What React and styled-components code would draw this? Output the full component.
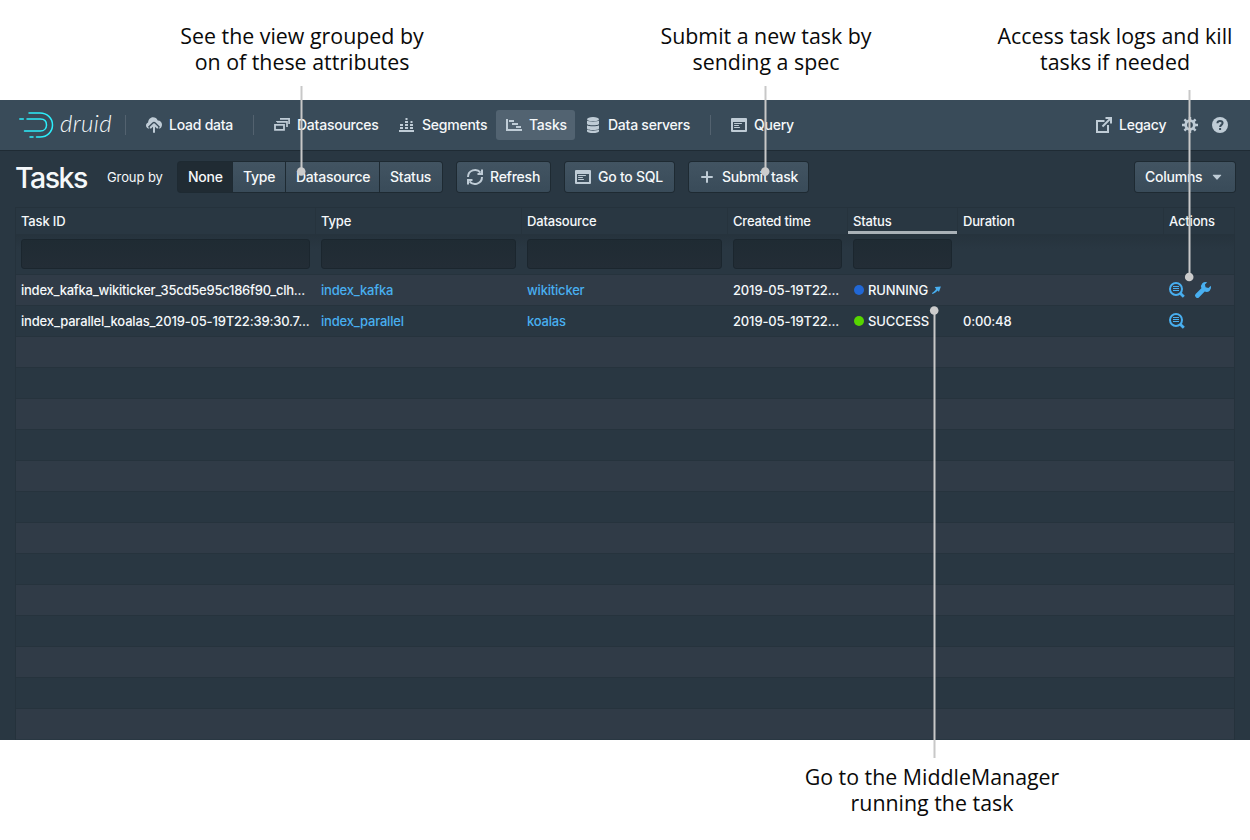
import React from 'react';
import styled, { createGlobalStyle } from 'styled-components';

const Global = createGlobalStyle`
  * { box-sizing: border-box; }
  body { margin: 0; background: #fff; overflow: hidden; }
`;

const Page = styled.div`
  position: relative;
  width: 1250px;
  height: 840px;
  background: #fff;
  font-family: Inter, 'Liberation Sans', sans-serif;
`;
const Band = styled.div`
  display: flex;
  height: 100px;
  padding-top: ${p => p.$top}px;
`;
const Caption = styled.p`
  margin: 0 0 0 ${p => p.$left}px;
  width: 280px;
  flex: none;
  text-align: center;
  font: 400 21.36px/26px 'Open Sans', sans-serif;
  color: #0a0a0a;
  white-space: nowrap;
`;
const Console = styled.main`
  display: flex;
  flex-direction: column;
  height: 640px;
  overflow: hidden;
  background: #293742;
  color: #f5f8fa;
`;
const Navbar = styled.nav`
  display: flex;
  align-items: center;
  flex: none;
  height: 50px;
  padding: 0 15px 0 19px;
  background: #394b59;
  box-shadow: 0 1px 0 #1f2b34;
`;
const Logo = styled.div`
  display: flex;
  align-items: center;
  width: 106px;
  flex: none;
`;
const Wordmark = styled.span`
  margin: -4px 0 0 6px;
  font: italic 300 24px/30px Lato, sans-serif;
  letter-spacing: 0.4px;
`;
const Divider = styled.i`
  width: 1px;
  height: 20px;
  margin: 0 10px;
  background: #53626f;
  &:first-of-type { margin-left: 0; }
`;
const NavItem = styled.a`
  display: flex;
  align-items: center;
  gap: 7px;
  width: ${p => p.$w}px;
  height: 30px;
  padding-left: ${p => p.$pad ?? 10}px;
  border-radius: 3px;
  flex: none;
  font-size: 14px;
  font-weight: 500;
  white-space: nowrap;
  background: ${p => (p.$active ? '#526371' : 'transparent')};
`;
const Spacer = styled.div`flex: 1;`;
const Label = styled.span`
  padding-bottom: 2px;
  letter-spacing: -0.24px;
`;
const Svg = styled.svg`
  width: ${p => p.$size}px;
  height: ${p => p.$size}px;
  flex: none;
  display: block;
  overflow: visible;
  color: ${p => p.$color || '#bfccd6'};
`;

const Toolbar = styled.header`
  display: flex;
  align-items: center;
  flex: none;
  height: 57px;
  padding: 0 15px 3px;
`;
const Title = styled.h1`
  margin: 2px 0 0;
  width: 92px;
  font-size: 28.5px;
  line-height: 34px;
  font-weight: 500;
  letter-spacing: -1.5px;
`;
const GroupLabel = styled.span`
  width: 71px;
  font-size: 13px;
  font-weight: 400;
  letter-spacing: -0.1px;
`;
const Button = styled.button`
  display: flex;
  align-items: center;
  flex: none;
  gap: 7px;
  width: ${p => p.$w}px;
  height: 30px;
  margin-left: ${p => p.$ml || 0}px;
  padding: 0 0 0 10px;
  border: 0;
  border-radius: 3px;
  background: ${p => (p.$active ? '#202b33' : 'linear-gradient(#425462, #394b59)')};
  box-shadow: 0 0 0 1px #1e2a32;
  color: #f5f8fa;
  font: 500 14px Inter, sans-serif;
  white-space: nowrap;
`;
const ButtonGroup = styled.div`
  display: flex;
  gap: 1px;
  ${Button} { border-radius: 0; }
  ${Button}:first-child { border-radius: 3px 0 0 3px; }
  ${Button}:last-child { border-radius: 0 3px 3px 0; }
`;

const Table = styled.section`
  margin: 0 15px;
  flex: 1;
  border: 1px solid #25323c;
  border-bottom: 0;
  font-size: 13px;
`;
const Row = styled.div`
  display: grid;
  grid-template-columns: 300px 206px 206px 120px 110px 206px 71px;
  align-items: center;
  height: 31px;
  background: ${p => (p.$odd ? '#303b47' : '#293742')};
  border-top: 1px solid #26333d;
`;
const HeaderRow = styled(Row)`
  height: 26px;
  border-top: 0;
  font-weight: 500;
`;
const HeaderCell = styled.div`
  height: 26px;
  padding: 0 5px;
  line-height: 27px;
  letter-spacing: -0.17px;
  border-right: 1px solid #26333d;
  box-shadow: ${p => (p.$sorted ? 'inset 0 -3px 0 #a9b1b7' : 'none')};
`;
const FilterRow = styled(Row)`
  height: 40px;
  align-items: start;
  padding-top: 4px;
  background: linear-gradient(#26333d, #293742 14px);
`;
const Filter = styled.input`
  display: block;
  width: calc(100% - 11px);
  height: 30px;
  margin-left: 5px;
  border: 1px solid #1b262e;
  border-radius: 3px;
  background: linear-gradient(#1f2b33, #232d36);
`;
const Cell = styled.div`
  display: flex;
  align-items: center;
  min-width: 0;
  padding: 0 5px;
  font-weight: 500;
  letter-spacing: ${p => p.$ls ?? -0.2}px;
  white-space: nowrap;
  color: ${p => (p.$link ? '#48aff0' : '#f5f8fa')};
`;
const Dot = styled.i`
  width: 10px;
  height: 10px;
  border-radius: 50%;
  margin: 0 4px 0 1px;
  background: ${p => p.$color};
`;
const WorkerLink = styled.a`
  display: flex;
  margin-left: 4px;
`;
const Actions = styled(Cell)`gap: 10px;`;
const Overlay = styled.svg`
  position: absolute;
  inset: 0;
  z-index: 2;
  pointer-events: none;
`;

const glyphs = {
  upload: (
    <>
      <path fill="currentColor" d="M2.200 11.500C.9 11 0 9.900 0 8.500c0-1.500.8-2.700 2.100-3.100C2.300 2.500 4.300.2 7 .2c2.200 0 3.900 1.200 4.700 3.200C14.200 3.300 16 5 16 7.400c0 1.900-.8 3.400-2.200 4z" />
      <path fill="#394b59" d="M8 4.700a2.300 2.300 0 0 1 1.600.7l4.300 4.300-2.300 3.300H4.400L2 9.800l4.400-4.400A2.300 2.300 0 0 1 8 4.700z" />
      <path fill="none" stroke="currentColor" strokeWidth="2" strokeLinecap="round" strokeLinejoin="round" d="M8 7.500V15M4.700 10.500 8 7.200l3.300 3.300" />
    </>
  ),
  stack: (
    <g fill="none" stroke="currentColor" strokeWidth="1.800">
      <path d="M1 7.900h9v5H1z" />
      <path d="M3 5V4.900h10V10" strokeWidth="1.700" />
      <path d="M6 1.900h9.100V7" strokeWidth="1.700" />
    </g>
  ),
  segments: (
    <path fill="currentColor" d="M0 13h15v2H0zM1 10h3v2H1zM1 7h3v2H1zM6 10h3v2H6zM6 7h3v2H6zM6 4h3v2H6zM6.500 1h2v2h-2zM11 10h3v2h-3zM11 7h3v2h-3zM11.500 4h2v2h-2z" />
  ),
  gantt: (
    <path fill="currentColor" d="M0 2h2v10h14v2H0zM3 3h5v2H3zM6 6h6v2H6zM10 9h5v2h-5z" />
  ),
  database: (
    <g fill="currentColor">
      <ellipse cx="8" cy="2.200" rx="6" ry="2.100" />
      <path d="M2 3.500c1.200 1.500 10.800 1.500 12 0v3.300c0 2-12 2-12 0z" />
      <path d="M2 8.200c1.200 1.500 10.800 1.500 12 0v3.200c0 2-12 2-12 0z" />
      <path d="M2 12.600c1.200 1.500 10.800 1.500 12 0v1.300c0 2.800-12 2.800-12 0z" />
    </g>
  ),
  app: (
    <path fill="currentColor" fillRule="evenodd" d="M1 1h14a1 1 0 0 1 1 1v12a1 1 0 0 1-1 1H1a1 1 0 0 1-1-1V2a1 1 0 0 1 1-1zm1 4v8h12V5zM3.500 6h7a.5.5 0 0 1 0 1h-7a.5.5 0 0 1 0-1zm0 2h4a.5.5 0 0 1 0 1h-4a.5.5 0 0 1 0-1zm0 2h5a.5.5 0 0 1 0 1h-5a.5.5 0 0 1 0-1z" />
  ),
  share: (
    <g fill="none" stroke="currentColor" strokeWidth="2">
      <path d="M8.500 4H1v11h11V8" />
      <path d="M6.500 9.500 14 2" />
      <path d="M9.500 1H15v5.500" />
    </g>
  ),
  gear: (
    <>
      <circle cx="8" cy="8" r="4.300" fill="none" stroke="currentColor" strokeWidth="2.800" />
      <g stroke="currentColor" strokeWidth="2.400">
        <path d="M8 0v3M8 13v3M0 8h3M13 8h3M2.400 2.400l2 2M11.600 11.600l2 2M13.600 2.400l-2 2M4.400 11.600l-2 2" />
      </g>
    </>
  ),
  help: (
    <>
      <circle cx="8" cy="8" r="8" fill="currentColor" />
      <path fill="none" stroke="#394b59" strokeWidth="2" d="M5.400 6.200C5.500 4.700 6.600 4 8 4s2.600.8 2.600 2.100c0 1.700-2.400 1.900-2.500 3.900" />
      <path fill="#394b59" d="M7.100 11h2v2h-2z" />
    </>
  ),
  refresh: (
    <g fill="none" stroke="currentColor" strokeWidth="2">
      <path d="M1 8a7 7 0 0 1 12.500-4.300M15 8a7 7 0 0 1-12.500 4.300" />
      <path d="M15 .5V5h-4.500M1 15.500V11h4.500" />
    </g>
  ),
  plus: <path stroke="currentColor" strokeWidth="2" strokeLinecap="round" d="M8 3v10M3 8h10" />,
  caret: <path fill="currentColor" d="M4 5.800h8c.3.1.3.500.1.700L8.400 10.600a.5.5 0 0 1-.8 0L3.900 6.500c-.2-.2-.2-.6.1-.7z" />,
  logs: (
    <g fill="none" stroke="currentColor">
      <circle cx="7" cy="7" r="6" strokeWidth="2" />
      <path d="m11.500 11.500 3.300 3.300" strokeWidth="2.800" />
      <path d="M4 4.500h6M4 6.500h6M4 8.500h6" strokeWidth="1" />
    </g>
  ),
  wrench: (
    <path fill="currentColor" d="M15.800 3.700 13.400 6 10.600 5.300 9.900 2.600 12.200.2A4.600 4.600 0 0 0 6.400 6.200L.6 12.100a2 2 0 0 0 0 2.800l.5.5a2 2 0 0 0 2.800 0L9.700 9.600A4.600 4.600 0 0 0 15.800 3.700z" />
  ),
  arrow: (
    <path fill="currentColor" d="M4.800 1.800 15.800.8 12.300 10.800 10.300 8.200C7.500 11 5 12.800 1.200 14 .2 14.300-.2 12.600.7 12 3.600 10.400 5.500 8.500 7.200 5.500z" />
  )
};
const Icon = ({ name, color, size = 16 }) => (
  <Svg viewBox="0 0 16 16" $color={color} $size={size}>{glyphs[name]}</Svg>
);

const Nav = ({ icon, children, ...rest }) => (
  <NavItem {...rest}>
    <Icon name={icon} />
    {children && <Label>{children}</Label>}
  </NavItem>
);

const columns = ['Task ID', 'Type', 'Datasource', 'Created time', 'Status', 'Duration', 'Actions'];
const tasks = [
  { id: 'index_kafka_wikiticker_35cd5e95c186f90_clh...', type: 'index_kafka', source: 'wikiticker', status: 'RUNNING', color: '#2167d5', duration: '' },
  { id: 'index_parallel_koalas_2019-05-19T22:39:30.7...', type: 'index_parallel', source: 'koalas', status: 'SUCCESS', color: '#57d500', duration: '0:00:48' }
];
const callouts = [
  [301.5, 86, 171.500],
  [765.5, 86, 171.500],
  [1189.5, 90, 277],
  [934.5, 758, 310.500]
];

export default function App() {
  return (
    <Page>
      <Global />
      <Band $top={23}>
        <Caption $left={162}>See the view grouped by<br />on of these attributes</Caption>
        <Caption $left={184}>Submit a new task by<br />sending a spec</Caption>
        <Caption $left={69}>Access task logs and kill<br />tasks if needed</Caption>
      </Band>
      <Console>
        <Navbar>
          <Logo>
            <svg width="35" height="28" viewBox="0 0 35 28" fill="none" stroke="#2ceefb" strokeWidth="1.500" strokeLinecap="round">
              <path d="M10 2h11c7 0 12.500 5 12.500 12S28 26 21 26h-3.500" />
              <path d="M8 8h13.500c4 0 6 2.500 6 6s-2.500 6-6 6H5.500M.8 8h3.500M11 26h3" />
            </svg>
            <Wordmark>druid</Wordmark>
          </Logo>
          <Divider />
          <Nav icon="upload" $w={107}>Load data</Nav>
          <Divider />
          <Nav icon="stack" $w={125}>Datasources</Nav>
          <Nav icon="segments" $w={107}>Segments</Nav>
          <Nav icon="gantt" $w={79} $active>Tasks</Nav>
          <Nav icon="database" $w={125}>Data servers</Nav>
          <Divider />
          <Nav icon="app" $w={82}>Query</Nav>
          <Spacer />
          <Nav icon="share" $w={89}>Legacy</Nav>
          <Nav icon="gear" $w={30} $pad={7} />
          <Nav icon="help" $w={30} $pad={7} />
        </Navbar>
        <Toolbar>
          <Title>Tasks</Title>
          <GroupLabel>Group by</GroupLabel>
          <ButtonGroup>
            <Button $w={54} $active><Label>None</Label></Button>
            <Button $w={52}><Label>Type</Label></Button>
            <Button $w={93}><Label>Datasource</Label></Button>
            <Button $w={62}><Label>Status</Label></Button>
          </ButtonGroup>
          <Button $w={93} $ml={15}><Icon name="refresh" /><Label>Refresh</Label></Button>
          <Button $w={109} $ml={15}><Icon name="app" /><Label>Go to SQL</Label></Button>
          <Button $w={119} $ml={15}><Icon name="plus" /><Label>Submit task</Label></Button>
          <Spacer />
          <Button $w={100}><Label>Columns</Label><Icon name="caret" /></Button>
        </Toolbar>
        <Table>
          <HeaderRow>
            {columns.map(c => <HeaderCell key={c} $sorted={c === 'Status'}>{c}</HeaderCell>)}
          </HeaderRow>
          <FilterRow>
            {columns.slice(0, 5).map(c => <div key={c}><Filter aria-label={c} /></div>)}
          </FilterRow>
          {tasks.map((t, i) => (
            <Row key={t.id} $odd={i % 2 === 0}>
              <Cell $ls={i === 0 ? -0.25 : -0.17}>{t.id}</Cell>
              <Cell $link>{t.type}</Cell>
              <Cell $link>{t.source}</Cell>
              <Cell $ls={-0.14}>2019-05-19T22...</Cell>
              <Cell $ls={-0.1}>
                <Dot $color={t.color} />
                {t.status}
                {i === 0 && <WorkerLink><Icon name="arrow" color="#48aff0" size={9} /></WorkerLink>}
              </Cell>
              <Cell>{t.duration}</Cell>
              <Actions>
                <Icon name="logs" color="#48aff0" />
                {i === 0 && <Icon name="wrench" color="#48aff0" />}
              </Actions>
            </Row>
          ))}
          {Array.from({ length: 13 }, (_, i) => <Row key={i} $odd={i % 2 === 0} />)}
        </Table>
      </Console>
      <Band $top={24}>
        <Caption $left={792}>Go to the MiddleManager<br />running the task</Caption>
      </Band>
      <Overlay width="1250" height="840">
        {callouts.map(([x, from, to]) => (
          <g key={x}>
            <path d={`M${x} ${from}V${to}`} stroke="#c8c8c8" strokeWidth="2" />
            <circle cx={x - 0.3} cy={to} r="4.300" fill="#ccc" />
          </g>
        ))}
      </Overlay>
    </Page>
  );
}
